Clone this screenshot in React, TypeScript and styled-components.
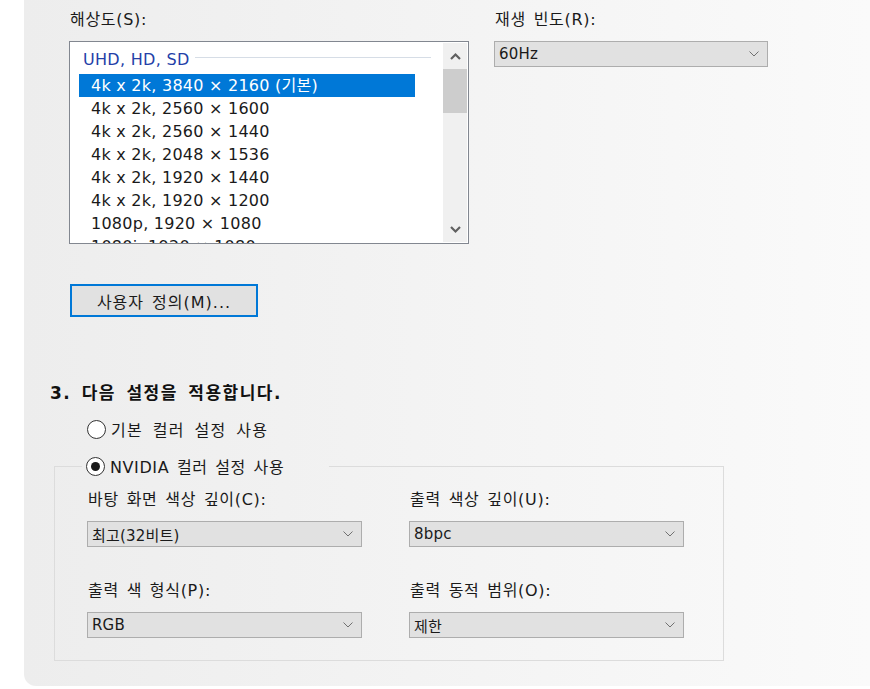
function App() {
  return (
    <>
      <GlobalStyle />
      <Panel>
        <TopRow>
          <Field>
            <Label>해상도(S):</Label>
            <ListBox>
              <ListBody>
                <GroupHeader>
                  <span>UHD, HD, SD</span>
                  <HeaderRule />
                </GroupHeader>
                {resolutions.map((res, i) => (
                  <Row key={res} selected={i === 0}>
                    {res}
                  </Row>
                ))}
              </ListBody>
              <ScrollBar>
                <ScrollButton>
                  <Arrow direction="up" />
                </ScrollButton>
                <Thumb />
                <Track />
                <ScrollButton>
                  <Arrow direction="down" />
                </ScrollButton>
              </ScrollBar>
            </ListBox>
          </Field>

          <Field>
            <Label>재생 빈도(R):</Label>
            <Select value="60Hz" />
          </Field>
        </TopRow>

        <Button>사용자 정의(M)...</Button>

        <Heading>3. 다음 설정을 적용합니다.</Heading>

        <RadioRow>
          <Radio />
          기본 컬러 설정 사용
        </RadioRow>

        <Group>
          <Legend>
            <Radio checked />
            NVIDIA 컬러 설정 사용
          </Legend>
          <GroupGrid>
            <Field>
              <Label>바탕 화면 색상 깊이(C):</Label>
              <Select value="최고(32비트)" />
            </Field>
            <Field>
              <Label>출력 색상 깊이(U):</Label>
              <Select value="8bpc" />
            </Field>
            <Field>
              <Label>출력 색 형식(P):</Label>
              <Select value="RGB" />
            </Field>
            <Field>
              <Label>출력 동적 범위(O):</Label>
              <Select value="제한" />
            </Field>
          </GroupGrid>
        </Group>
      </Panel>
    </>
  )
}

const resolutions = [
  '4k x 2k, 3840 × 2160 (기본)',
  '4k x 2k, 2560 × 1600',
  '4k x 2k, 2560 × 1440',
  '4k x 2k, 2048 × 1536',
  '4k x 2k, 1920 × 1440',
  '4k x 2k, 1920 × 1200',
  '1080p, 1920 × 1080',
  '1080i, 1920 × 1080',
]

function Select({ value }: { value: string }) {
  return (
    <SelectBox>
      <span>{value}</span>
      <svg width="10" height="6" viewBox="0 0 10 6">
        <polyline points="0.5,0.5 5,5 9.5,0.5" fill="none" stroke="#707070" strokeWidth="1" />
      </svg>
    </SelectBox>
  )
}

function Arrow({ direction }: { direction: 'up' | 'down' }) {
  const points = direction === 'up' ? '1,7 5.5,2.5 10,7' : '1,2 5.5,6.5 10,2'
  return (
    <svg width="11" height="9" viewBox="0 0 11 9">
      <polyline points={points} fill="none" stroke="#606060" strokeWidth="2.2" />
    </svg>
  )
}

///////////////////////////////////////////////////////////////////////////////////

const GlobalStyle = createGlobalStyle`
  html, body {
    margin: 0;
    background: #ffffff;
  }
  body {
    font-family: "DejaVu Sans", "Noto Sans CJK KR", sans-serif;
    font-size: 16px;
    color: #1a1a1a;
  }
`

const Panel = styled.div`
  margin-left: 24px;
  height: 686px;
  box-sizing: border-box;
  padding: 10px 0 0 26px;
  background: linear-gradient(to right, #ededed, #fafafa);
  border-bottom-left-radius: 12px;
  display: flex;
  flex-direction: column;
  align-items: flex-start;
`

const TopRow = styled.div`
  display: grid;
  grid-template-columns: 400px 274px;
  column-gap: 25px;
  margin-left: 19px;
`

const Field = styled.div`
  display: flex;
  flex-direction: column;
`

const Label = styled.div`
  height: 20px;
  line-height: 20px;
  margin-bottom: 11px;
  padding-left: 1px;
  letter-spacing: 0.7px;
  word-spacing: 2px;
  white-space: nowrap;
`

const ListBox = styled.div`
  width: 400px;
  height: 203px;
  box-sizing: border-box;
  border: 1px solid #828790;
  background: #ffffff;
  display: flex;
`

const ListBody = styled.div`
  flex: 1;
  overflow: hidden;
  padding: 6px 0 0 9px;
`

const GroupHeader = styled.div`
  display: flex;
  align-items: center;
  width: 352px;
  height: 22px;
  margin-bottom: 4px;
  padding-left: 4px;
  box-sizing: border-box;
  color: #2440a8;
  letter-spacing: 0.3px;
`

const HeaderRule = styled.div`
  flex: 1;
  height: 1px;
  margin-left: 5px;
  margin-top: -3px;
  background: #d6dde6;
`

const Row = styled.div<{ selected?: boolean }>`
  width: 336px;
  height: 23px;
  line-height: 23px;
  padding-left: 12px;
  box-sizing: border-box;
  white-space: nowrap;
  letter-spacing: 0.25px;
  background: ${p => (p.selected ? '#0078d7' : 'transparent')};
  color: ${p => (p.selected ? '#ffffff' : '#1a1a1a')};
`

const ScrollBar = styled.div`
  width: 24px;
  margin: 1px 1px 1px 0;
  background: #f0f0f0;
  display: flex;
  flex-direction: column;
`

const ScrollButton = styled.div`
  height: 26px;
  display: flex;
  align-items: center;
  justify-content: center;
`

const Thumb = styled.div`
  height: 44px;
  background: #cdcdcd;
`

const Track = styled.div`
  flex: 1;
`

const SelectBox = styled.div`
  width: 274px;
  height: 26px;
  box-sizing: border-box;
  border: 1px solid #adadad;
  background: #e1e1e1;
  display: flex;
  align-items: center;
  justify-content: space-between;
  padding: 0 8px 0 4px;
  font-size: 15px;
  letter-spacing: 0.2px;
`

const Button = styled.div`
  width: 188px;
  height: 33px;
  box-sizing: border-box;
  margin: 40px 0 0 20px;
  border: 2px solid #0078d7;
  background: #e1e1e1;
  display: flex;
  align-items: center;
  justify-content: center;
  letter-spacing: 1px;
  word-spacing: 2px;
`

const Heading = styled.div`
  margin-top: 65px;
  height: 22px;
  line-height: 22px;
  font-weight: 700;
  font-size: 17px;
  letter-spacing: 1.5px;
  word-spacing: 3px;
  color: #111111;
`

const RadioRow = styled.label`
  display: flex;
  align-items: center;
  gap: 5px;
  height: 24px;
  margin: 13px 0 0 37px;
  letter-spacing: 1.4px;
  word-spacing: 3px;
`

const Radio = styled.span<{ checked?: boolean }>`
  width: 19px;
  height: 19px;
  box-sizing: border-box;
  border-radius: 50%;
  border: 1px solid #333333;
  background: #ffffff;
  display: inline-flex;
  align-items: center;
  justify-content: center;
  flex-shrink: 0;
  &::after {
    content: '';
    display: ${p => (p.checked ? 'block' : 'none')};
    width: 9px;
    height: 9px;
    border-radius: 50%;
    background: #1a1a1a;
  }
`

const Group = styled.fieldset`
  margin: 13px 0 0 4px;
  padding: 0 0 22px 32px;
  width: 670px;
  box-sizing: border-box;
  border: 1px solid #dcdcdc;
  min-width: 0;
`

const Legend = styled.legend`
  display: flex;
  align-items: center;
  gap: 5px;
  width: 247px;
  height: 24px;
  box-sizing: border-box;
  margin-left: -5px;
  padding: 0 4px;
  letter-spacing: 0.6px;
  word-spacing: 2px;
`

const GroupGrid = styled.div`
  display: grid;
  grid-template-columns: 275px 275px;
  column-gap: 47px;
  row-gap: 34px;
  margin-top: 12px;

  ${SelectBox} {
    width: 275px;
  }
`

///////////////////////////////////////////////////////////////////////////////////

import React from 'react'
import styled, { createGlobalStyle } from 'styled-components'

export default App
